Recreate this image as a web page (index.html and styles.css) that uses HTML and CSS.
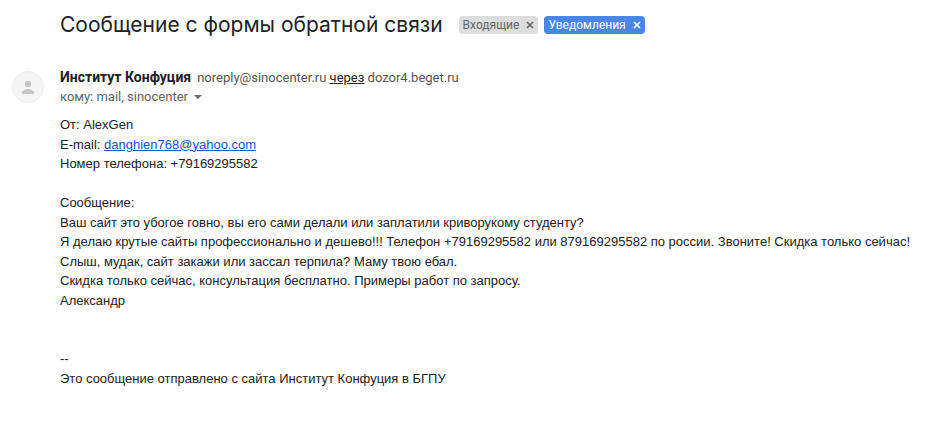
FILE: index.html
```html
<!DOCTYPE html>
<html lang="ru">
<head>
  <meta charset="UTF-8">
  <title>Сообщение с формы обратной связи</title>
  <meta name="viewport" content="width=device-width, initial-scale=1.0">
  <link rel="stylesheet" href="styles.css">
</head>
<body>

<header class="subject">
  <h1>Сообщение с формы обратной связи</h1>
  <div class="labels">
    <span class="label">Входящие
      <button type="button" aria-label="Удалить ярлык Входящие">
        <svg width="8" height="8" viewBox="0 0 8 8"><path d="M1 1l6 6M7 1L1 7"/></svg>
      </button>
    </span>
    <span class="label label-blue">Уведомления
      <button type="button" aria-label="Удалить ярлык Уведомления">
        <svg width="8" height="8" viewBox="0 0 8 8"><path d="M1 1l6 6M7 1L1 7"/></svg>
      </button>
    </span>
  </div>
</header>

<main class="message">
  <div class="avatar">
    <svg width="32" height="32" viewBox="0 0 32 32">
      <circle cx="16" cy="16" r="15.5" fill="#f5f5f5" stroke="#ececec"/>
      <circle cx="16" cy="13" r="3.2" fill="#c6c6c6"/>
      <path d="M10 23v-1.8c0-2.200 4-3.200 6-3.200s6 1 6 3.200V23z" fill="#c6c6c6"/>
    </svg>
  </div>

  <div class="content">
    <div class="sender">
      <strong>Институт Конфуция</strong>
      <span>noreply@sinocenter.ru <a href="#">через</a> dozor4.beget.ru</span>
    </div>
    <div class="recipients">
      <span>кому: mail, sinocenter</span>
      <button type="button" aria-label="Показать детали">
        <svg width="8" height="4" viewBox="0 0 8 4"><path d="M0 0h8L4 4z"/></svg>
      </button>
    </div>

    <div class="text">
      От: AlexGen<br>
      E-mail: <a href="mailto:danghien768@yahoo.com">danghien768@yahoo.com</a><br>
      Номер телефона: +79169295582<br>
      <br>
      Сообщение:<br>
      Ваш сайт это убогое говно, вы его сами делали или заплатили криворукому студенту?<br>
      Я делаю крутые сайты профессионально и дешево!!! Телефон +79169295582 или 879169295582 по россии. Звоните! Скидка только сейчас!<br>
      Слыш, мудак, сайт закажи или зассал терпила? Маму твою ебал.<br>
      Скидка только сейчас, консультация бесплатно. Примеры работ по запросу.<br>
      Александр<br>
      <br>
      <br>
      --<br>
      Это сообщение отправлено с сайта Институт Конфуция в БГПУ
    </div>
  </div>
</main>

</body>
</html>
```

FILE: styles.css
```css
:root {
  --text-color: #222;
  --muted-color: #5f6368;
  --accent-color: #4986e7;
  --link-color: #1155cc;
}

body {
  margin: 0;
  padding: 11px 12px;
  background-color: #fff;
  color: var(--text-color);
  font-family: Roboto, sans-serif;
  font-size: 13px;
}

button {
  display: flex;
  padding: 0;
  border: none;
  background: none;
  color: inherit;
  cursor: pointer;
}

/* Subject line */
.subject {
  display: flex;
  align-items: center;
  gap: 16px;
  padding-left: 48px;
}

h1 {
  margin: 0;
  color: #202124;
  font-family: "Google Sans", Inter, sans-serif;
  font-size: 21px;
  font-weight: 400;
  line-height: 28px;
}

.labels {
  display: flex;
  gap: 6px;
}

.label {
  display: flex;
  align-items: center;
  gap: 7px;
  padding: 0 4px;
  border-radius: 4px;
  background-color: #ddd;
  color: #666;
  font-size: 12px;
  line-height: 18px;
}

.label-blue {
  background-color: var(--accent-color);
  color: #fff;
}

.label path {
  fill: none;
  stroke: currentColor;
  stroke-width: 1.7;
}

/* Message */
.message {
  display: flex;
  gap: 16px;
  padding-top: 28px;
}

.avatar {
  flex: none;
  padding-top: 4px;
}

.content {
  flex: 1;
}

.sender {
  display: flex;
  align-items: baseline;
  gap: 6px;
  color: #555;
  line-height: 20px;
}

.sender strong {
  color: #202124;
  font-size: 14px;
}

.sender a {
  color: var(--text-color);
}

.recipients {
  display: flex;
  align-items: center;
  gap: 6px;
  color: var(--muted-color);
  line-height: 18px;
}

.recipients path {
  fill: #666;
}

.text {
  padding-top: 9px;
  font-family: "Liberation Sans", Arial, sans-serif;
  font-size: 13px;
  line-height: 1.5;
}

.text a {
  color: var(--link-color);
}
```
